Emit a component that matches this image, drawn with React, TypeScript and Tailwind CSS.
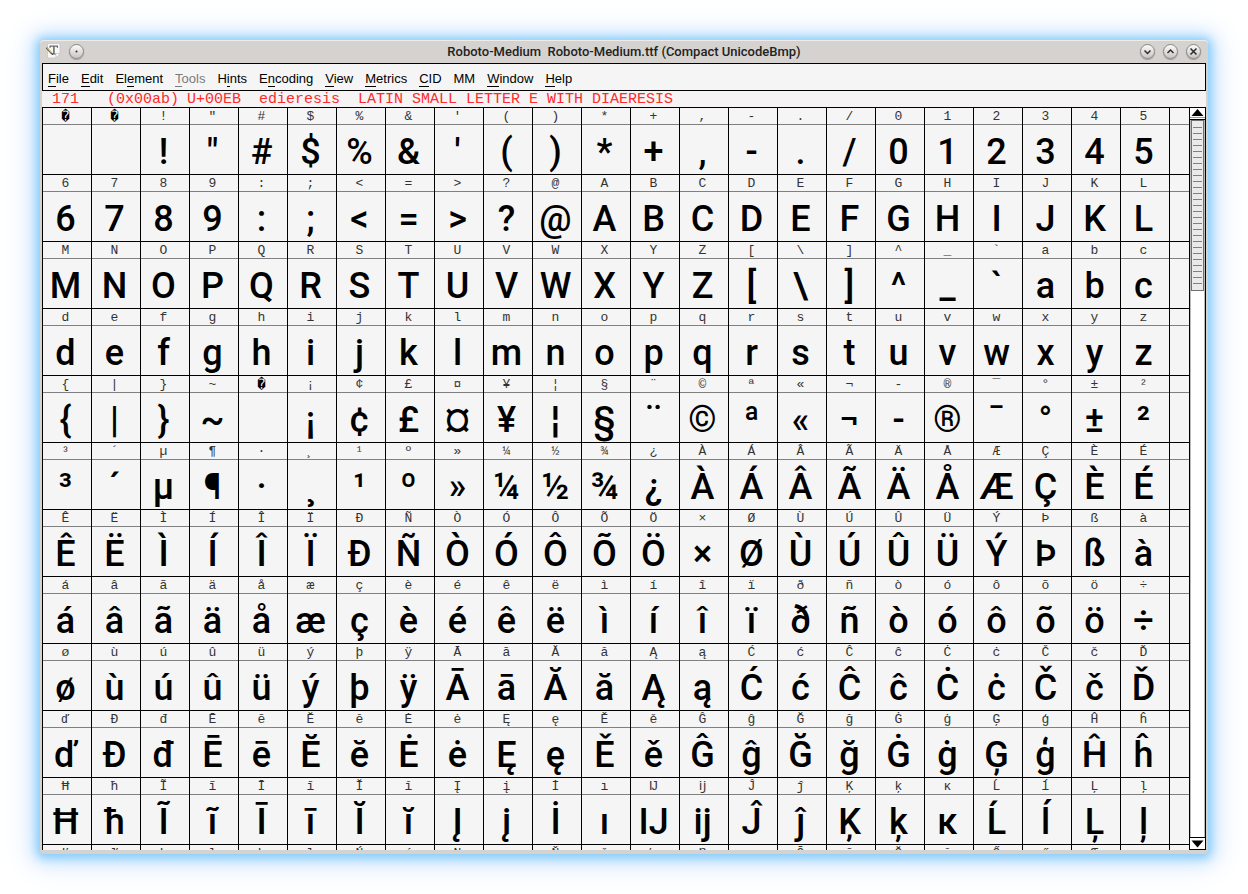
import React from "react";

const COLUMNS = 23;
const MISSING = 0xfffd;

const range = (from: number, to: number): number[] =>
  Array.from({ length: to - from + 1 }, (_, i) => from + i);

// Two unencoded slots, printable ASCII, then Latin-1 and Latin Extended-A.
// The no-break space shows as missing and the soft hyphen as a plain hyphen.
const CODES: number[] = [MISSING, MISSING, ...range(0x21, 0x7e), MISSING, ...range(0xa1, 0x153)].map((c) =>
  c === 0xad ? 0x2d : c,
);

const ROWS: number[][] = Array.from({ length: Math.ceil(CODES.length / COLUMNS) }, (_, r) =>
  CODES.slice(r * COLUMNS, (r + 1) * COLUMNS),
);

type MenuEntry = { label: string; mnemonic?: number; disabled?: boolean };

const MENUS: MenuEntry[] = [
  { label: "File", mnemonic: 0 },
  { label: "Edit", mnemonic: 0 },
  { label: "Element", mnemonic: 2 },
  { label: "Tools", mnemonic: 0, disabled: true },
  { label: "Hints", mnemonic: 1 },
  { label: "Encoding", mnemonic: 1 },
  { label: "View", mnemonic: 0 },
  { label: "Metrics", mnemonic: 0 },
  { label: "CID", mnemonic: 0 },
  { label: "MM" },
  { label: "Window", mnemonic: 0 },
  { label: "Help", mnemonic: 0 },
];

function MenuItem({ label, mnemonic = -1, disabled }: MenuEntry) {
  return (
    <button disabled={disabled} className="leading-4 text-black disabled:text-[#7b7b7b]">
      {mnemonic < 0 ? (
        label
      ) : (
        <>
          {label.slice(0, mnemonic)}
          <span className="border-b border-current">{label[mnemonic]}</span>
          {label.slice(mnemonic + 1)}
        </>
      )}
    </button>
  );
}

function TitleButton({ label, children }: { label: string; children: React.ReactNode }) {
  return (
    <button
      aria-label={label}
      className="flex size-[15px] items-center justify-center rounded-full border border-[#8a8785] bg-linear-to-b from-[#fbfbfa] to-[#c9c5c2] shadow-[0_1px_1px_#9c9896]"
    >
      <svg viewBox="0 0 13 13" className="size-[13px] shrink-0" fill="none" stroke="#2c2c2c" strokeWidth="1.5">
        {children}
      </svg>
    </button>
  );
}

function AppIcon() {
  return (
    <svg viewBox="0 0 16 16" className="size-4">
      <path d="M1.500 .5h12.500v10l-4 4.500H1.500z" fill="#f7f7f6" stroke="#c4c1be" strokeWidth=".7" />
      <path d="M14 10.500l-4 4.500v-4.500z" fill="#fff" stroke="#b5b5b5" strokeWidth=".6" />
      <path
        d="M3.500 2.500h8.500V5h-.7l-.8-1.300H8.700v6.600l1.300.6v.6H5.800v-.6l1.300-.6V3.700H5L4.200 5h-.7z"
        fill="#6c6e70"
      />
      <path d="M.5 4.600L6 11" stroke="#6f6640" strokeWidth="1.800" />
      <path d="M.6 4.200L6.200 10.600" stroke="#d9bf62" strokeWidth="1" />
      <path d="M5.600 10l1.300 2" stroke="#333" strokeWidth="1" />
    </svg>
  );
}

function GlyphCell({ code }: { code: number }) {
  const missing = code === MISSING;
  const text = String.fromCodePoint(code);
  return (
    <div className="w-[49px] shrink-0 border-r border-black">
      {missing ? (
        <div className="h-[17px] border-b border-[#808080] pr-[3px] text-center font-['DejaVu_Sans_Mono',monospace] text-[14px] leading-[17px] text-black">
          {text}
        </div>
      ) : (
        <div className="h-[17px] border-b border-[#808080] pr-[3px] text-center font-['Liberation_Mono','DejaVu_Sans_Mono',monospace] text-[13px] leading-[17px] text-[#333]">
          {text}
        </div>
      )}
      <div className="h-[49px] pt-1 pr-[3px] text-center font-[Roboto,sans-serif] text-[36px] leading-[47px] font-medium text-black">
        {missing ? null : text}
      </div>
    </div>
  );
}

function GlyphRow({ codes }: { codes: number[] }) {
  return (
    <div className="flex shrink-0 border-b border-black">
      {codes.map((code, i) => (
        <GlyphCell key={i} code={code} />
      ))}
      <div className="grow">
        <div className="h-[17px] border-b border-[#808080]" />
      </div>
    </div>
  );
}

function Scrollbar() {
  return (
    <div className="flex w-[17px] shrink-0 flex-col border-x border-black bg-white">
      <button
        aria-label="Scroll up"
        className="flex h-3 shrink-0 items-center justify-center border-b border-black"
      >
        <svg viewBox="0 0 15 11" className="h-[11px] w-[15px]">
          <path d="M7.500 1L13.500 8H1.500z" fill="#000" />
          <path d="M0 9.500h15" stroke="#999" />
        </svg>
      </button>
      <div className="flex min-h-0 grow flex-col border-x border-[#bbb]">
        <div className="flex h-[171px] shrink-0 flex-col items-center gap-[5px] border border-[#707070] bg-[#eaeaea] pt-[6px]">
          {range(1, 27).map((i) => (
            <div key={i} className="h-px w-[9px] shrink-0 bg-[#808080]" />
          ))}
        </div>
      </div>
      <button
        aria-label="Scroll down"
        className="flex h-[13px] shrink-0 items-center justify-center border-y border-black"
      >
        <svg viewBox="0 0 15 11" className="h-[11px] w-[15px]">
          <path d="M1.500 2.500h12L7.500 9.500z" fill="#000" />
        </svg>
      </button>
    </div>
  );
}

export default function App() {
  return (
    <div className="h-screen bg-white p-10">
      <div className="flex h-full flex-col rounded-[4px] bg-[#d6d2cf] px-[2px] pb-1 shadow-[inset_0_1px_0_#eeeceb,0_1px_8px_2px_#84cdfa,0_1px_16px_5px_#b4dcfc,0_2px_30px_12px_#e6f0ff]">
        <header className="grid h-[23px] shrink-0 grid-cols-[1fr_auto_1fr] items-center px-1 pb-px">
          <div className="flex items-center gap-[7px]">
            <AppIcon />
            <TitleButton label="On all desktops">
              <circle cx="6.500" cy="6.500" r="1" fill="#2c2c2c" stroke="none" />
            </TitleButton>
          </div>
          <h1 className="pt-px font-[Roboto,sans-serif] text-[13px] leading-4 font-medium whitespace-pre text-[#222]">
            {"Roboto-Medium  Roboto-Medium.ttf (Compact UnicodeBmp)"}
          </h1>
          <div className="flex items-center justify-end gap-2 pr-px">
            <TitleButton label="Minimize">
              <path d="M3.500 5.500l3 3 3-3" />
            </TitleButton>
            <TitleButton label="Maximize">
              <path d="M3.500 8l3-3 3 3" />
            </TitleButton>
            <TitleButton label="Close">
              <path d="M3.500 3.500l6 6M9.500 3.500l-6 6" />
            </TitleButton>
          </div>
        </header>

        <nav className="flex h-7 shrink-0 items-center gap-3 border border-black bg-[#f5f5f5] px-[5px] pt-1 font-['Liberation_Sans',sans-serif] text-[13px]">
          {MENUS.map((m) => (
            <MenuItem key={m.label} {...m} />
          ))}
        </nav>

        <div className="h-4 shrink-0 bg-[#f5f3f4] pl-[10px] font-['Liberation_Mono',monospace] text-[15px] leading-[18px] whitespace-pre text-[#ff2a2a]">
          <span>171</span>
          <span className="pl-7">(0x00ab)</span>
          <span className="pl-2">U+00EB</span>
          <span className="pl-[18px]">edieresis</span>
          <span className="pl-[18px]">LATIN SMALL LETTER E WITH DIAERESIS</span>
        </div>

        <main className="flex min-h-0 grow border-t border-black bg-[#f5f5f5]">
          <div className="flex min-w-0 grow flex-col overflow-hidden border-l border-black">
            {ROWS.map((codes, r) => (
              <GlyphRow key={r} codes={codes} />
            ))}
          </div>
          <Scrollbar />
        </main>
      </div>
    </div>
  );
}
